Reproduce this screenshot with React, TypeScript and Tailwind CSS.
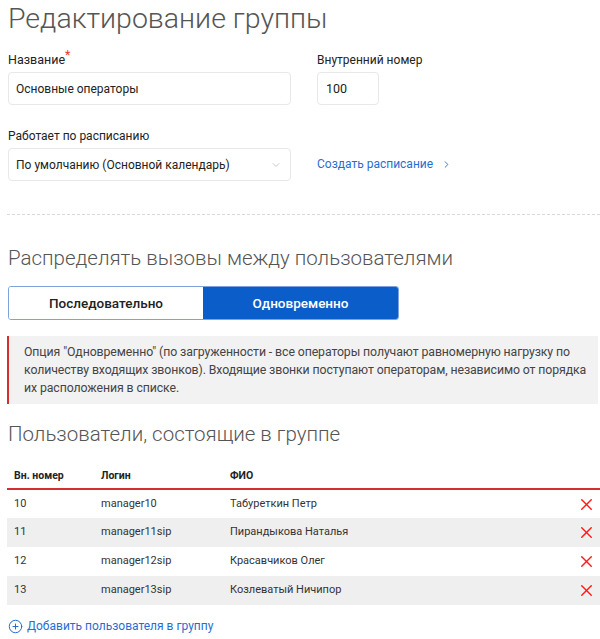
import { ChevronDown, ChevronRight, CirclePlus, X } from "lucide-react";
import { useState } from "react";

const MEMBERS = [
  { ext: "10", login: "manager10", name: "Табуреткин Петр" },
  { ext: "11", login: "manager11sip", name: "Пирандыкова Наталья" },
  { ext: "12", login: "manager12sip", name: "Красавчиков Олег" },
  { ext: "13", login: "manager13sip", name: "Козлеватый Ничипор" },
];

const GroupEdit = () => {
  const [mode, setMode] = useState<"seq" | "all">("all");

  return (
    <div className="w-[600px] bg-white pl-[7px] font-['Roboto',sans-serif] text-[#222]">
      <h1 className="pl-px pt-[2px] text-[28.5px] font-light leading-[34px] text-[#555]">
        Редактирование группы
      </h1>

      {/* основные поля группы */}
      <div className="mt-[15px] grid grid-cols-[284px_1fr] gap-x-[25px] pl-px">
        <div>
          <label className="block text-[12.5px] leading-[18px]">
            Название<span className="relative -top-[5px] text-[#e53935]">*</span>
          </label>
          <input
            defaultValue="Основные операторы"
            className="mt-[3px] h-[33px] w-[283px] rounded-[4px] border border-[#e8e8e8] px-[7px] text-[12px] outline-none"
          />
        </div>
        <div>
          <label className="block text-[12px] leading-[18px]">Внутренний номер</label>
          <input
            defaultValue="100"
            className="mt-[3px] h-[33px] w-[62px] rounded-[4px] border border-[#e8e8e8] px-[8px] text-[12.5px] outline-none"
          />
        </div>

        <div className="mt-[22px]">
          <label className="block text-[12px] leading-[18px]">Работает по расписанию</label>
          <div className="mt-[3px] flex h-[33px] w-[283px] items-center justify-between rounded-[4px] border border-[#e8e8e8] pl-[7px] pr-[8px] text-[12px]">
            <span>По умолчанию (Основной календарь)</span>
            <ChevronDown className="h-[12px] w-[12px] text-[#bbb]" strokeWidth={1.5} />
          </div>
        </div>
        <div className="mt-[22px] flex items-end pb-[8px]">
          <a className="flex items-center gap-[8px] text-[12px] text-[#1f6fd1]">
            Создать расписание
            <ChevronRight className="h-[11px] w-[11px]" strokeWidth={2} />
          </a>
        </div>
      </div>

      <div className="mt-[33px] border-t border-dashed border-[#d8d8d8]" />

      <h2 className="mt-[29px] pl-px text-[20.5px] font-light leading-[28px] text-[#555]">
        Распределять вызовы между пользователями
      </h2>

      {/* переключатель режима распределения */}
      <div className="mt-[14px] ml-px flex h-[34px] w-[391px] overflow-hidden rounded-[3px] border border-[#7ea3dc] text-[13.5px] font-medium">
        <button
          onClick={() => setMode("seq")}
          className={
            mode === "seq"
              ? "w-[194px] bg-[#0b5ec9] text-white"
              : "w-[194px] bg-white text-[#222]"
          }
        >
          Последовательно
        </button>
        <button
          onClick={() => setMode("all")}
          className={
            mode === "all"
              ? "flex-1 bg-[#0b5ec9] text-white"
              : "flex-1 bg-white text-[#222]"
          }
        >
          Одновременно
        </button>
      </div>

      <div className="mt-[16px] mr-[2px] border-l-2 border-[#d32f2f] bg-[#f2f2f2] py-[7px] pl-[15px] pr-[2px] text-[12.3px] leading-[18px] tracking-[-0.1px] text-[#444]">
        Опция "Одновременно" (по загруженности - все операторы получают равномерную нагрузку по
        количеству входящих звонков). Входящие звонки поступают операторам, независимо от порядка
        их расположения в списке.
      </div>

      <h2 className="mt-[16px] pl-px text-[20.5px] font-light leading-[28px] text-[#555]">
        Пользователи, состоящие в группе
      </h2>

      {/* таблица пользователей */}
      <table className="mt-[15px] w-full text-[11px]">
        <thead>
          <tr className="border-b-2 border-[#d32f2f] text-left">
            <th className="h-[26px] w-[93px] pl-[7px] align-middle text-[10.5px] font-bold">Вн. номер</th>
            <th className="w-[130px] pl-px text-[10.5px] font-bold">Логин</th>
            <th className="text-[10.5px] font-bold">ФИО</th>
            <th className="w-[30px]" />
          </tr>
        </thead>
        <tbody>
          {MEMBERS.map((m, i) => (
            <tr key={m.ext} className={i % 2 ? "bg-[#efefef] text-[#333]" : "bg-white text-[#333]"}>
              <td className="h-[29px] pl-[7px]">{m.ext}</td>
              <td className="pl-px">{m.login}</td>
              <td>{m.name}</td>
              <td>
                <X className="ml-[7px] h-[19px] w-[19px] text-[#ff1a1a]" strokeWidth={1.8} />
              </td>
            </tr>
          ))}
        </tbody>
      </table>

      <a className="mt-[12px] flex items-center gap-[4px] pl-px text-[12px] text-[#1f6fd1]">
        <CirclePlus className="h-[15px] w-[15px]" strokeWidth={1.6} />
        Добавить пользователя в группу
      </a>
    </div>
  );
};

export default GroupEdit;
